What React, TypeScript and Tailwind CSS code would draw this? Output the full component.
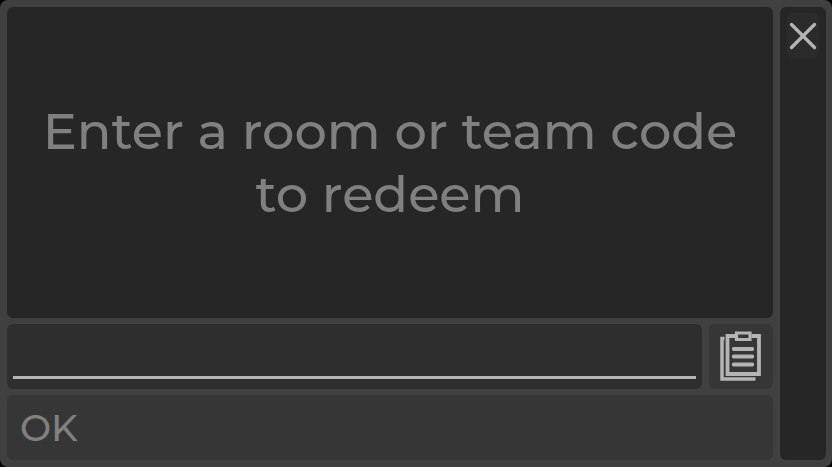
import { useState } from "react";

function CloseIcon() {
  return (
    <svg width="32" height="32" viewBox="0 0 32 32" fill="none" stroke="#b4b4b4" strokeWidth="3.3" strokeLinecap="round" aria-hidden="true">
      <path d="M4.5 4.5 27.5 27.5M27.5 4.5 4.5 27.5" />
    </svg>
  );
}

function ClipboardIcon() {
  return (
    <svg width="42" height="51" viewBox="0 0 42 51" fill="none" stroke="#b4b4b4" aria-hidden="true">
      <path d="M4.5 7.5H2V48H35.5" strokeWidth="3.5" />
      <path d="M15 5H7.5V43H39V5H31.5" strokeWidth="3.8" />
      <path d="M16.5 2H30V8.5H16.5Z" strokeWidth="3.2" />
      <path d="M13.75 18H32.25M13.75 25.5H32.25M13.75 33.5H32.25" strokeWidth="3.8" strokeLinecap="round" />
    </svg>
  );
}

export default function App() {
  const [code, setCode] = useState("");

  return (
    <div className="flex min-h-screen bg-black font-['Montserrat',Inter,sans-serif] font-medium">
      <main className="flex flex-1 gap-[7px] rounded-lg bg-[#404040] py-[7px] pl-[7px] pr-[6px]">
        <form className="flex min-w-0 flex-1 flex-col gap-[6px]" onSubmit={(e) => e.preventDefault()}>
          <div className="flex flex-1 items-center justify-center rounded-md bg-[#262626] px-8">
            <label htmlFor="code" className="text-center text-[51px] leading-[63px] text-[#808080]">
              Enter a room or team code to redeem
            </label>
          </div>
          <div className="flex h-[65px] gap-[7px]">
            <div className="flex min-w-0 flex-1 rounded-md bg-[#2e2e2e] px-[6px] pb-[10px] pt-2">
              <input
                id="code"
                value={code}
                onChange={(e) => setCode(e.target.value)}
                autoComplete="off"
                className="w-full border-b-3 border-[#b4b4b4] bg-transparent text-4xl text-[#b4b4b4] outline-none"
              />
            </div>
            <button type="button" aria-label="Paste" className="flex w-16 items-center justify-center rounded-md bg-[#363636]">
              <ClipboardIcon />
            </button>
          </div>
          <button type="submit" className="h-[65px] rounded-md bg-[#363636] px-[13px] text-left text-[37px] leading-[65px] text-[#808080]">
            OK
          </button>
        </form>
        <aside className="w-[46px] rounded-md bg-[#262626] px-[7px] py-[6px]">
          <button type="button" aria-label="Close" className="flex h-[45px] w-full items-center justify-center rounded-md bg-[#2b2b2b]">
            <CloseIcon />
          </button>
        </aside>
      </main>
    </div>
  );
}
